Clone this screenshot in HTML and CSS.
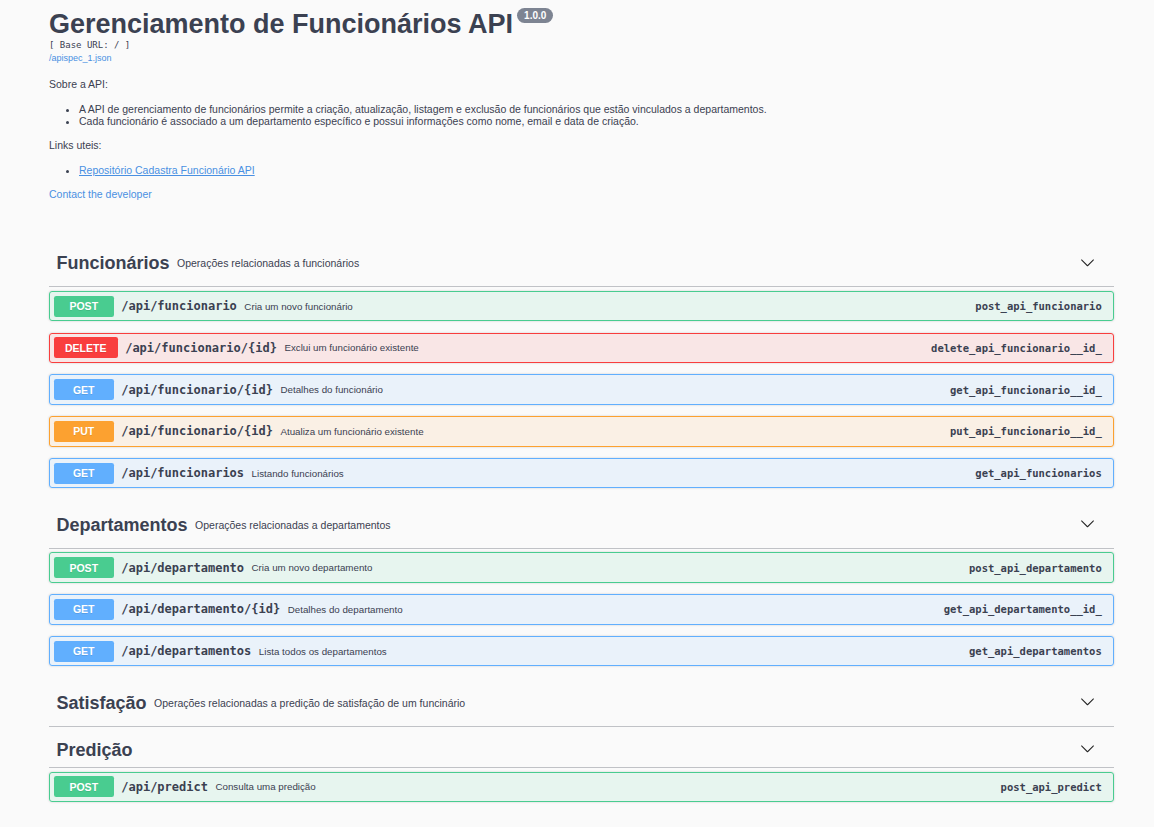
FILE: index.html
```html
<!DOCTYPE html>
<html lang="pt-BR">
<head>
<meta charset="utf-8">
<title>Gerenciamento de Funcionários API</title>
<link rel="stylesheet" href="styles.css">
</head>
<body>
<div class="wrapper">
  <section class="info">
    <hgroup class="main">
      <h2 class="title">Gerenciamento de Funcionários API <span class="version">1.0.0</span></h2>
      <pre class="base-url">[ Base URL: / ]</pre>
      <a class="spec-link" href="#">/apispec_1.json</a>
    </hgroup>
    <div class="description">
      <p>Sobre a API:</p>
      <ul>
        <li>A API de gerenciamento de funcionários permite a criação, atualização, listagem e exclusão de funcionários que estão vinculados a departamentos.</li>
        <li>Cada funcionário é associado a um departamento específico e possui informações como nome, email e data de criação.</li>
      </ul>
      <p>Links uteis:</p>
      <ul>
        <li><a href="#">Repositório Cadastra Funcionário API</a></li>
      </ul>
    </div>
    <div class="contact"><a href="#">Contact the developer</a></div>
  </section>

  <section class="tag-section">
    <h3 class="tag">
      <span class="tag-name">Funcionários</span>
      <small class="tag-desc"><p>Operações relacionadas a funcionários</p></small>
      <button class="expand" type="button"><svg viewBox="0 0 20 20"><path d="M17.418 6.109c.272-.268.709-.268.979 0s.271.701 0 .969l-7.908 7.83c-.27.268-.707.268-.979 0l-7.908-7.83c-.27-.268-.27-.701 0-.969.271-.268.709-.268.979 0L10 13.25l7.418-7.141z"/></svg></button>
    </h3>
    <div class="opblock post"><span class="method">POST</span><span class="path">/api/funcionario</span><span class="summary-desc">Cria um novo funcionário</span><span class="op-id">post_api_funcionario</span></div>
    <div class="opblock delete"><span class="method">DELETE</span><span class="path">/api/funcionario/{id}</span><span class="summary-desc">Exclui um funcionário existente</span><span class="op-id">delete_api_funcionario__id_</span></div>
    <div class="opblock get"><span class="method">GET</span><span class="path">/api/funcionario/{id}</span><span class="summary-desc">Detalhes do funcionário</span><span class="op-id">get_api_funcionario__id_</span></div>
    <div class="opblock put"><span class="method">PUT</span><span class="path">/api/funcionario/{id}</span><span class="summary-desc">Atualiza um funcionário existente</span><span class="op-id">put_api_funcionario__id_</span></div>
    <div class="opblock get"><span class="method">GET</span><span class="path">/api/funcionarios</span><span class="summary-desc">Listando funcionários</span><span class="op-id">get_api_funcionarios</span></div>
  </section>

  <section class="tag-section">
    <h3 class="tag">
      <span class="tag-name">Departamentos</span>
      <small class="tag-desc"><p>Operações relacionadas a departamentos</p></small>
      <button class="expand" type="button"><svg viewBox="0 0 20 20"><path d="M17.418 6.109c.272-.268.709-.268.979 0s.271.701 0 .969l-7.908 7.83c-.27.268-.707.268-.979 0l-7.908-7.83c-.27-.268-.27-.701 0-.969.271-.268.709-.268.979 0L10 13.25l7.418-7.141z"/></svg></button>
    </h3>
    <div class="opblock post"><span class="method">POST</span><span class="path">/api/departamento</span><span class="summary-desc">Cria um novo departamento</span><span class="op-id">post_api_departamento</span></div>
    <div class="opblock get"><span class="method">GET</span><span class="path">/api/departamento/{id}</span><span class="summary-desc">Detalhes do departamento</span><span class="op-id">get_api_departamento__id_</span></div>
    <div class="opblock get"><span class="method">GET</span><span class="path">/api/departamentos</span><span class="summary-desc">Lista todos os departamentos</span><span class="op-id">get_api_departamentos</span></div>
  </section>

  <section class="tag-section">
    <h3 class="tag">
      <span class="tag-name">Satisfação</span>
      <small class="tag-desc"><p>Operações relacionadas a predição de satisfação de um funcinário</p></small>
      <button class="expand" type="button"><svg viewBox="0 0 20 20"><path d="M17.418 6.109c.272-.268.709-.268.979 0s.271.701 0 .969l-7.908 7.83c-.27.268-.707.268-.979 0l-7.908-7.83c-.27-.268-.27-.701 0-.969.271-.268.709-.268.979 0L10 13.25l7.418-7.141z"/></svg></button>
    </h3>
  </section>

  <section class="tag-section">
    <h3 class="tag">
      <span class="tag-name">Predição</span>
      <button class="expand" type="button"><svg viewBox="0 0 20 20"><path d="M17.418 6.109c.272-.268.709-.268.979 0s.271.701 0 .969l-7.908 7.83c-.27.268-.707.268-.979 0l-7.908-7.83c-.27-.268-.27-.701 0-.969.271-.268.709-.268.979 0L10 13.25l7.418-7.141z"/></svg></button>
    </h3>
    <div class="opblock post"><span class="method">POST</span><span class="path">/api/predict</span><span class="summary-desc">Consulta uma predição</span><span class="op-id">post_api_predict</span></div>
  </section>
</div>
</body>
</html>
```

FILE: styles.css
```css
html, body {
  margin: 0;
  background: #fafafa;
}

body {
  color: #3b4151;
  font-family: "Liberation Sans", Arial, sans-serif;
}

.wrapper {
  padding: 10px 40px 0 49px;
}

/* ---------- info ---------- */
.main {
  margin: 0 0 13px;
}

.title {
  display: flex;
  align-items: flex-start;
  margin: 0;
  font-size: 27px;
  line-height: 29px;
  font-weight: 700;
  color: #3b4151;
}

.version {
  margin: -2px 0 0 4px;
  padding: 0 7px;
  background: #7d8492;
  color: #fff;
  border-radius: 57px;
  font-size: 10px;
  line-height: 15px;
  font-weight: 700;
}

.base-url {
  margin: 1px 0 0;
  font: 9px/11px "DejaVu Sans Mono", monospace;
  color: #3b4151;
}

.spec-link {
  display: block;
  margin-top: 2px;
  font-size: 9px;
  line-height: 11px;
  color: #4990e2;
  text-decoration: none;
}

.description p {
  margin: 0 0 10.5px;
  font-size: 10.5px;
  line-height: 15.75px;
}

.description ul {
  margin: 0 0 10.5px;
  padding-left: 30px;
  font-size: 10.5px;
  line-height: 12px;
}

.description a {
  color: #4990e2;
  text-decoration: underline;
}

.contact {
  margin-bottom: 35.75px;
  font-size: 10.5px;
  line-height: 15.75px;
}

.contact a {
  color: #4990e2;
  text-decoration: none;
}

/* ---------- tags ---------- */
.tag {
  display: flex;
  align-items: center;
  margin: 0 0 3.75px;
  padding: 7.5px 15px 7.5px 7.5px;
  border-bottom: 1px solid rgba(59, 65, 81, 0.3);
  font-size: 18px;
  font-weight: 700;
  color: #3b4151;
}

.tag-name {
  padding-top: 3px;
  line-height: 18.5px;
}

.tag-desc {
  flex: 1;
  padding: 0 7.5px;
  font-size: 10.5px;
  font-weight: 400;
}

.tag-desc p {
  margin: 11.5px 0 9.5px;
  line-height: 12px;
}

.expand {
  display: flex;
  margin-left: auto;
  padding: 0 4.5px 0 7.5px;
  background: none;
  border: 0;
}

.expand svg {
  width: 15px;
  height: 15px;
  fill: #222;
}

/* ---------- operations ---------- */
.opblock {
  display: flex;
  align-items: center;
  margin: 0 0 11.25px;
  padding: 3.75px;
  border: 1px solid;
  border-radius: 3px;
  box-shadow: 0 0 2.25px rgba(0, 0, 0, 0.19);
}

.method {
  box-sizing: border-box;
  min-width: 60px;
  padding: 4.5px 11.25px;
  border-radius: 2.25px;
  color: #fff;
  font-size: 10.5px;
  line-height: 12px;
  font-weight: 700;
  text-align: center;
  text-shadow: 0 1px 0 rgba(0, 0, 0, 0.1);
}

.path {
  padding: 0 7.5px;
  font: 700 12px/14px "DejaVu Sans Mono", monospace;
  color: #3b4151;
}

.summary-desc {
  flex: 1;
  font-size: 9.75px;
  color: #3b4151;
}

.op-id {
  padding: 0 7.5px;
  font: 700 10.5px/12px "DejaVu Sans Mono", monospace;
  color: #3b4151;
}

.post { background: rgba(73, 204, 144, 0.1); border-color: #49cc90; }
.post .method { background: #49cc90; }

.delete { background: rgba(249, 62, 62, 0.1); border-color: #f93e3e; }
.delete .method { background: #f93e3e; }

.get { background: rgba(97, 175, 254, 0.1); border-color: #61affe; }
.get .method { background: #61affe; }

.put { background: rgba(252, 161, 48, 0.1); border-color: #fca130; }
.put .method { background: #fca130; }
```
